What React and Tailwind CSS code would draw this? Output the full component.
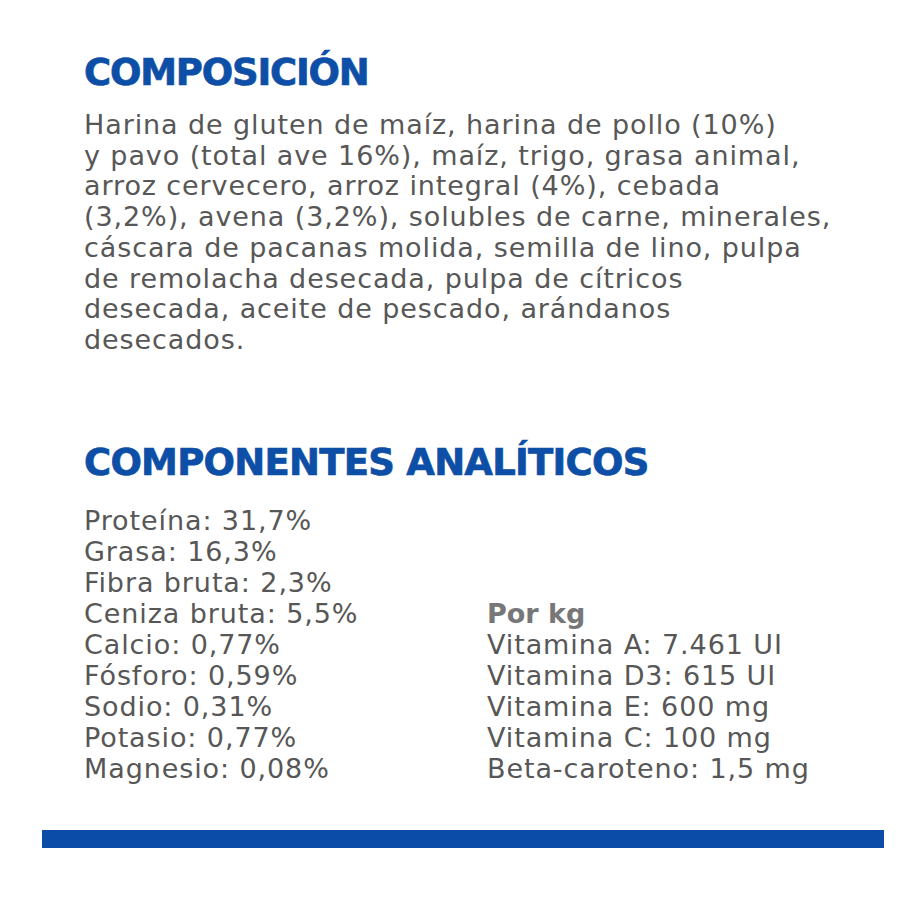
export default function App() {
  const comp = [
    "Harina de gluten de maíz, harina de pollo (10%)",
    "y pavo (total ave 16%), maíz, trigo, grasa animal,",
    "arroz cervecero, arroz integral (4%), cebada",
    "(3,2%), avena (3,2%), solubles de carne, minerales,",
    "cáscara de pacanas molida, semilla de lino, pulpa",
    "de remolacha desecada, pulpa de cítricos",
    "desecada, aceite de pescado, arándanos",
    "desecados.",
  ];
  const left = [
    "Proteína: 31,7%",
    "Grasa: 16,3%",
    "Fibra bruta: 2,3%",
    "Ceniza bruta: 5,5%",
    "Calcio: 0,77%",
    "Fósforo: 0,59%",
    "Sodio: 0,31%",
    "Potasio: 0,77%",
    "Magnesio: 0,08%",
  ];
  const right = [
    "Vitamina A: 7.461 UI",
    "Vitamina D3: 615 UI",
    "Vitamina E: 600 mg",
    "Vitamina C: 100 mg",
    "Beta-caroteno: 1,5 mg",
  ];
  const heading =
    "text-[37px] leading-[44px] font-bold text-[#0d4ea6] [-webkit-text-stroke:0.7px_#0d4ea6]";
  return (
    <div className="w-[900px] h-[900px] bg-white flex flex-col" style={{ fontFamily: '"DejaVu Sans", sans-serif' }}>
      <div className="pl-[84px] pt-[51px]">
        <h2 className={`${heading} tracking-[-1.2px]`}>COMPOSICIÓN</h2>
        <p className="mt-[15px] text-[27px] leading-[30.7px] text-[#575757] tracking-[0.9px]">
          {comp.map((l, i) => (
            <span key={i} className="block">{l}</span>
          ))}
        </p>
        <h2 className={`mt-[85px] ${heading} tracking-[-0.75px]`}>COMPONENTES ANALÍTICOS</h2>
        <div className="mt-[20px] flex text-[27px] leading-[31px] text-[#575757] tracking-[0.9px]">
          <div className="w-[403px]">
            {left.map((l, i) => (
              <div key={i}>{l}</div>
            ))}
          </div>
          <div className="flex flex-col justify-end">
            <div className="font-bold text-[#777777] tracking-[0px]">Por kg</div>
            {right.map((l, i) => (
              <div key={i}>{l}</div>
            ))}
          </div>
        </div>
      </div>
      <div className="mt-[46px] ml-[42px] w-[842px] h-[18px] bg-[#0a4ca8]" />
    </div>
  );
}
